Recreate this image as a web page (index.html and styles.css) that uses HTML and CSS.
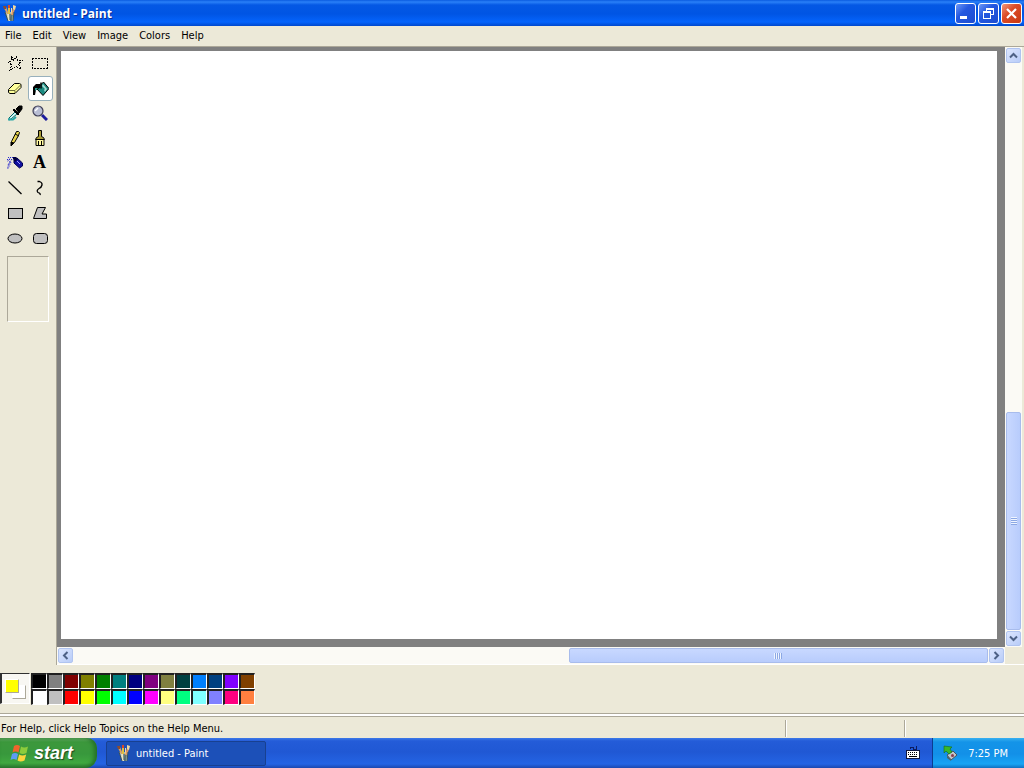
FILE: index.html
```html
<!DOCTYPE html>
<html lang="en">
<head>
    <meta charset="UTF-8">
    <meta name="viewport" content="width=device-width, initial-scale=1.0">
    <title>untitled - Paint</title>
    <link rel="stylesheet" href="styles.css">
</head>
<body>

    <!-- Shared icons -->
    <svg class="defs" aria-hidden="true">
        <symbol id="paint-logo" viewBox="0 0 16 16">
            <path d="M3 7h9l-1 9H6z" fill="#a8bcb8"/>
            <path d="M5 8h2l1 8H6z" fill="#ece4c0"/>
            <path d="M9 8h2l-1 8H8z" fill="#5c7470"/>
            <path d="M2 3l2-1 3 7H5z" fill="#d8a060"/>
            <path d="M1 1h3v3H2z" fill="#8c4c30"/>
            <path d="M6 3h2v6H6z" fill="#e0c040"/>
            <path d="M6 0h2v3H6z" fill="#d84828"/>
            <path d="M9 3h1v6H9z" fill="#f0dca8"/>
            <path d="M11 3l2 1-2 6H9z" fill="#e09860"/>
            <path d="M11 0l3 1-1 4-2-1z" fill="#f0d8a0"/>
            <path d="M3 7l3 9M12 7l-1 9M8 9v6" fill="none" stroke="#38505c"/>
        </symbol>
        <symbol id="chevron" viewBox="0 0 9 9">
            <path d="M1 6.500l3.500-3.500 3.500 3.500" fill="none" stroke="#4d6185" stroke-width="2"/>
        </symbol>
    </svg>

    <div class="window">
        <header class="titlebar">
            <svg class="logo"><use href="#paint-logo"/></svg>
            <h1>untitled - Paint</h1>
            <button class="win-btn" aria-label="Minimize">
                <svg viewBox="0 0 19 19"><path d="M4 12h7v3H4z" fill="#fff"/></svg>
            </button>
            <button class="win-btn" aria-label="Restore">
                <svg viewBox="0 0 19 19" shape-rendering="crispEdges">
                    <path d="M7 4h8v7h-3v-1h2V6H8v1H7zM4 7h8v8H4zM5 9v5h6V9z" fill="#fff" fill-rule="evenodd"/>
                </svg>
            </button>
            <button class="win-btn close" aria-label="Close">
                <svg viewBox="0 0 19 19"><path d="M5 5l9 9M14 5l-9 9" stroke="#fff" stroke-width="2.200"/></svg>
            </button>
        </header>

        <nav class="menubar">
            <button>File</button>
            <button>Edit</button>
            <button>View</button>
            <button>Image</button>
            <button>Colors</button>
            <button>Help</button>
        </nav>

        <div class="main">
            <aside class="toolbox">
                <div class="tools">
                    <button class="tool" aria-label="Free-form select">
                        <svg viewBox="0 0 16 16" shape-rendering="crispEdges"><path d="M4.500 1.500l2 4 3-4 1 4h5l-4 3.500 2.500 5-5-2.500-6 4 1.500-5.500-3.500-3 3.500-1z" fill="none" stroke="#000" stroke-dasharray="2 1"/></svg>
                    </button>
                    <button class="tool" aria-label="Select">
                        <svg viewBox="0 0 16 16" shape-rendering="crispEdges"><path d="M0 3.500h16M15.500 3v11M16 13.500H0M.5 14V3" fill="none" stroke="#000" stroke-dasharray="2 1"/></svg>
                    </button>
                    <button class="tool" aria-label="Eraser">
                        <svg viewBox="0 0 16 16">
                            <path d="M1.500 9.500l6-6h5l1.500 1v3l-6 6h-5l-1.500-1z" fill="#ffff9a" stroke="#000"/>
                            <path d="M2 10.500h6l6-6M8 11v2" fill="none" stroke="#6b6b38"/>
                        </svg>
                    </button>
                    <button class="tool selected" aria-label="Fill with color">
                        <svg viewBox="0 0 16 16">
                            <path d="M6 5.500L10.500 1l5.500 6.500-6 7L4 8z" fill="#1a8a80" stroke="#000"/>
                            <path d="M10 3l4 5-2 3-1-2 1-1-3-3z" fill="#a8dcd4"/>
                            <path d="M8 1.500v6" stroke="#000" stroke-width="1.500"/>
                            <path d="M7 3H3L0 6v8h2l1-5 4-2z" fill="#000"/>
                            <path d="M2 7h3l-3 3z" fill="#20a090"/>
                        </svg>
                    </button>
                    <button class="tool" aria-label="Pick color">
                        <svg viewBox="0 0 16 16">
                            <path d="M2 13l6-6 2 2-6 5-2 1z" fill="#d0f4f4" stroke="#006868"/>
                            <path d="M1 14.500h5l3-2.500" fill="none" stroke="#28a8a8" stroke-width="2"/>
                            <path d="M7 4l5 5-1 1-5-5zM9 4l3-3h3v3l-3 4z" fill="#000" stroke="#000"/>
                        </svg>
                    </button>
                    <button class="tool" aria-label="Magnifier">
                        <svg viewBox="0 0 16 16">
                            <path d="M10 10l5 5" stroke="#1c1c9c" stroke-width="3"/>
                            <circle cx="6" cy="6" r="5" fill="#b9bed4" stroke="#404058" stroke-width="1.200"/>
                            <path d="M3 6l3-3" stroke="#fff" stroke-width="1.500"/>
                        </svg>
                    </button>
                    <button class="tool" aria-label="Pencil">
                        <svg viewBox="0 0 16 16">
                            <path d="M9.500 1.500h2l1 1-1 3-4 7-3 3v-4z" fill="#e8d44c" stroke="#000"/>
                            <path d="M4 12l3 1-3 3zM8 4l4 2" fill="#000" stroke="#000"/>
                        </svg>
                    </button>
                    <button class="tool" aria-label="Brush">
                        <svg viewBox="0 0 16 16">
                            <path d="M6.500 .5h3v6l2 1 1 2H3.500l1-2 2-1z" fill="#a89c38" stroke="#000"/>
                            <path d="M4 9.500h8v6H4z" fill="#fff8a0" stroke="#000"/>
                            <path d="M6.500 11v4M9.500 11v4" stroke="#000"/>
                        </svg>
                    </button>
                    <button class="tool" aria-label="Airbrush">
                        <svg viewBox="0 0 16 16">
                            <path d="M7 5l3-2 5.500 5v3l-3 2-5.500-5z" fill="#1010a0" stroke="#000050"/>
                            <path d="M6 2h3l2 2-3 3-2-3z" fill="#000040"/>
                            <path d="M10 6l3 3" stroke="#a0a0ff"/>
                            <path d="M6 2.500H1M5 4.500H0M4 2L0 7M5 4l-4 6M3 6l-3 8M4 7l-3 7" fill="none" stroke="#2828d0" stroke-dasharray="1 1"/>
                        </svg>
                    </button>
                    <button class="tool text-tool" aria-label="Text">A</button>
                    <button class="tool" aria-label="Line">
                        <svg viewBox="0 0 16 16"><path d="M1.500 1.500l13 12.500" stroke="#000" stroke-width="1.300"/></svg>
                    </button>
                    <button class="tool" aria-label="Curve">
                        <svg viewBox="0 0 16 16"><path d="M5.500 1.500h2q3 1 2.500 3.500t-3 3.500q-3 2-1 4 3 1 2 2.500" fill="none" stroke="#000" stroke-width="1.300"/></svg>
                    </button>
                    <button class="tool" aria-label="Rectangle">
                        <svg viewBox="0 0 16 16" shape-rendering="crispEdges"><path d="M1.500 3.500h14v10h-14z" fill="#c0c0c0" stroke="#000"/></svg>
                    </button>
                    <button class="tool" aria-label="Polygon">
                        <svg viewBox="0 0 16 16"><path d="M5.500 2.500h8l-3.500 6.500h4.500v4.500h-13z" fill="#c0c0c0" stroke="#000"/></svg>
                    </button>
                    <button class="tool" aria-label="Ellipse">
                        <svg viewBox="0 0 16 16"><ellipse cx="8" cy="8.500" rx="7" ry="4.500" fill="#c0c0c0" stroke="#000"/></svg>
                    </button>
                    <button class="tool" aria-label="Rounded rectangle">
                        <svg viewBox="0 0 16 16"><rect x="1.500" y="3.500" width="14" height="10" rx="3" fill="#c0c0c0" stroke="#000"/></svg>
                    </button>
                </div>
                <div class="tool-options"></div>
            </aside>

            <div class="workspace">
                <div class="canvas-area"><div class="canvas"></div></div>
                <div class="scrollbar vertical">
                    <button class="arrow" aria-label="Scroll up"><svg><use href="#chevron"/></svg></button>
                    <div class="track"></div>
                    <div class="thumb"><span class="grip"></span></div>
                    <button class="arrow down" aria-label="Scroll down"><svg><use href="#chevron"/></svg></button>
                </div>
                <div class="scrollbar horizontal">
                    <button class="arrow left" aria-label="Scroll left"><svg><use href="#chevron"/></svg></button>
                    <div class="track"></div>
                    <div class="thumb"><span class="grip"></span></div>
                    <button class="arrow right" aria-label="Scroll right"><svg><use href="#chevron"/></svg></button>
                </div>
                <div class="corner"></div>
            </div>
        </div>

        <div class="palette">
            <div class="current">
                <span class="background-color"></span>
                <span class="foreground-color"></span>
            </div>
            <div class="swatches">
                <button class="swatch black" aria-label="Black"></button>
                <button class="swatch gray" aria-label="Gray"></button>
                <button class="swatch maroon" aria-label="Maroon"></button>
                <button class="swatch olive" aria-label="Olive"></button>
                <button class="swatch green" aria-label="Green"></button>
                <button class="swatch teal" aria-label="Teal"></button>
                <button class="swatch navy" aria-label="Navy"></button>
                <button class="swatch purple" aria-label="Purple"></button>
                <button class="swatch moss" aria-label="Moss"></button>
                <button class="swatch pine" aria-label="Pine"></button>
                <button class="swatch azure" aria-label="Azure"></button>
                <button class="swatch denim" aria-label="Denim"></button>
                <button class="swatch violet" aria-label="Violet"></button>
                <button class="swatch brown" aria-label="Brown"></button>
                <button class="swatch white" aria-label="White"></button>
                <button class="swatch silver" aria-label="Silver"></button>
                <button class="swatch red" aria-label="Red"></button>
                <button class="swatch yellow" aria-label="Yellow"></button>
                <button class="swatch lime" aria-label="Lime"></button>
                <button class="swatch cyan" aria-label="Cyan"></button>
                <button class="swatch blue" aria-label="Blue"></button>
                <button class="swatch magenta" aria-label="Magenta"></button>
                <button class="swatch cream" aria-label="Cream"></button>
                <button class="swatch mint" aria-label="Mint"></button>
                <button class="swatch ice" aria-label="Ice"></button>
                <button class="swatch lavender" aria-label="Lavender"></button>
                <button class="swatch rose" aria-label="Rose"></button>
                <button class="swatch orange" aria-label="Orange"></button>
            </div>
        </div>

        <footer class="statusbar">
            <span class="help-text">For Help, click Help Topics on the Help Menu.</span>
            <span class="pane"></span>
            <span class="pane"></span>
        </footer>
    </div>

    <div class="taskbar">
        <button class="start">
            <svg viewBox="0 0 20 20">
                <path d="M4 3q3-2 6 0L8.500 9.500q-3-2-6 0z" fill="#f0642c"/>
                <path d="M11 3.500q3 2 7 0L16.500 10q-4 2-7 0z" fill="#8ccc3c"/>
                <path d="M2 11q3-2 6 0l-1.500 6q-3-2-6 0z" fill="#5c9cf4"/>
                <path d="M9.200 11.500q3 2 7 0l-1.700 6q-4 2-7 0z" fill="#fcd43c"/>
            </svg>
            <span>start</span>
        </button>
        <button class="task">
            <svg class="logo"><use href="#paint-logo"/></svg>
            <span>untitled - Paint</span>
        </button>
        <svg class="keyboard" viewBox="0 0 14 14" shape-rendering="crispEdges">
            <path d="M4 3V1h3v2h3V0" fill="none" stroke="#0c1c60"/>
            <path d="M0 4h14v9H0z" fill="#101840"/>
            <path d="M1 5h12v7H1z" fill="#fff"/>
            <path d="M2 6.500h10M2 8.500h10" stroke="#000" stroke-dasharray="1 1"/>
            <path d="M3 10.500h8" stroke="#000"/>
        </svg>
        <div class="tray">
            <svg viewBox="0 0 16 16">
                <path d="M4 10l6-4 4 4-6 5z" fill="#c0c8cc" stroke="#45565c"/>
                <path d="M4 11l4 3v2l-4-3z" fill="#506468"/>
                <circle cx="9.500" cy="10.500" r="1.500" fill="#8c3c4c"/>
                <path d="M1 1l8 1-2 2 2 3-3 2-3-3-2 2z" fill="#38b828" stroke="#186c18" stroke-width=".6"/>
            </svg>
            <time>7:25 PM</time>
        </div>
    </div>

</body>
</html>
```

FILE: styles.css
```css
* {
    box-sizing: border-box;
}

body {
    margin: 0;
    height: 100vh;
    display: flex;
    flex-direction: column;
    overflow: hidden;
    background-color: #ece9d8;
    color: #000;
    font-family: Tahoma, "DejaVu Sans Condensed", "Liberation Sans", sans-serif;
    font-size: 11px;
}

button {
    margin: 0;
    padding: 0;
    border: none;
    background: none;
    color: inherit;
    font: inherit;
}

svg {
    display: block;
    flex: none;
}

.defs {
    position: absolute;
    width: 0;
    height: 0;
}

.logo {
    width: 16px;
    height: 16px;
}

.window {
    flex: 1;
    min-height: 0;
    display: flex;
    flex-direction: column;
}

/* Title bar */
.titlebar {
    display: flex;
    align-items: center;
    gap: 2px;
    height: 26px;
    padding: 0 2px;
    background: linear-gradient(#0a5be0 0, #2a80f8 2px, #0458e4 5px, #0055e4 14px, #0464fc 22px, #0048cc 26px);
}

.titlebar h1 {
    flex: 1;
    margin: 0;
    padding-left: 2px;
    color: #fff;
    font-family: "Open Sans", "Trebuchet MS", sans-serif;
    font-size: 12px;
    font-weight: bold;
    text-shadow: 1px 1px #0a2c90;
}

.win-btn {
    width: 21px;
    height: 21px;
    border: 1px solid #fff;
    border-radius: 3px;
    background: linear-gradient(135deg, #6c98f8, #2458e0 40%, #1c4cd0);
}

.win-btn.close {
    background: linear-gradient(135deg, #f0987c, #dc4c28 40%, #c83810);
}

/* Menu */
.menubar {
    display: flex;
    gap: 11px;
    height: 20px;
    padding: 0 5px 2px;
}

/* Tools */
.main {
    flex: 1;
    min-height: 0;
    display: flex;
}

.toolbox {
    width: 57px;
    padding: 3px 2px;
    border-top: 1px solid #aca899;
    border-right: 1px solid #aca899;
}

.tools {
    display: grid;
    grid-template-columns: repeat(2, 25px);
    grid-auto-rows: 25px;
}

.tool {
    display: flex;
    align-items: center;
    justify-content: center;
}

.tool svg {
    width: 16px;
    height: 16px;
}

.tool.selected {
    margin: 1px -1px -1px 1px;
    border: 1px solid #98b0bc;
    border-radius: 3px;
    background-color: #fff;
}

.text-tool {
    font-family: "Liberation Serif", serif;
    font-size: 18px;
    font-weight: bold;
}

.tool-options {
    width: 42px;
    height: 66px;
    margin: 6px 0 0 5px;
    border: 1px solid;
    border-color: #aca899 #fff #fff #aca899;
}

/* Canvas and scrollbars */
.workspace {
    flex: 1;
    min-width: 0;
    display: grid;
    grid-template-columns: 1fr 17px;
    grid-template-rows: 1fr 17px;
    padding-right: 2px;
    border-top: 1px solid #aca899;
    border-bottom: 1px solid #fff;
}

.canvas-area {
    padding: 4px 8px 8px 4px;
    background-color: #808080;
}

.canvas {
    height: 100%;
    background-color: #fff;
}

.scrollbar {
    display: flex;
    gap: 1px;
    padding: 1px;
    background-color: #fbfaf5;
}

.vertical {
    flex-direction: column;
}

.horizontal {
    grid-row: 2;
    grid-column: 1;
}

.corner {
    grid-row: 2;
    grid-column: 2;
}

.arrow {
    display: flex;
    align-items: center;
    justify-content: center;
    width: 15px;
    height: 15px;
    border: 1px solid #b0c4f0;
    border-radius: 2px;
    background: linear-gradient(135deg, #dce6fe, #b8ccf8);
}

.arrow svg {
    width: 9px;
    height: 9px;
}

.arrow.down svg {
    transform: rotate(180deg);
}

.arrow.left svg {
    transform: rotate(-90deg);
}

.arrow.right svg {
    transform: rotate(90deg);
}

.track {
    flex: 495;
}

.thumb {
    flex: 418;
    display: flex;
    align-items: center;
    justify-content: center;
    border: 1px solid #a8bcec;
    border-radius: 2px;
    background: linear-gradient(#c8d8ff, #b8ccfc);
}

.grip {
    width: 8px;
    height: 6px;
    background: repeating-linear-gradient(90deg, #eef4ff 0 1px, #8ca8e4 1px 2px);
}

.vertical .track {
    flex: 348;
}

.vertical .thumb {
    flex: 217;
    background: linear-gradient(90deg, #c8d8ff, #b8ccfc);
}

.vertical .grip {
    width: 6px;
    height: 8px;
    background: repeating-linear-gradient(#eef4ff 0 1px, #8ca8e4 1px 2px);
}

/* Color palette */
.palette {
    display: flex;
    gap: 1px;
    height: 49px;
    padding-top: 8px;
    border-bottom: 1px solid #aca899;
}

.current {
    position: relative;
    width: 30px;
    height: 31px;
    border: solid;
    border-width: 1px 1px 1px 2px;
    border-color: #303030 #fff #fff #303030;
    background-color: #f8f7f2;
}

.foreground-color,
.background-color {
    position: absolute;
    width: 14px;
    height: 14px;
    border: 1px solid;
    border-color: #fff #aca899 #aca899 #fff;
}

.foreground-color {
    top: 5px;
    left: 3px;
    background-color: #ff0;
}

.background-color {
    top: 11px;
    left: 10px;
    background-color: #fff;
}

.swatches {
    display: grid;
    grid-template-columns: repeat(14, 16px);
    grid-auto-rows: 16px;
}

.swatch {
    border: solid;
    border-width: 2px 1px 1px 2px;
    border-color: #202020 #fff #fff #202020;
}

.black { background-color: #000; }
.gray { background-color: #808080; }
.maroon { background-color: #800000; }
.olive { background-color: #808000; }
.green { background-color: #008000; }
.teal { background-color: #008080; }
.navy { background-color: #000080; }
.purple { background-color: #800080; }
.moss { background-color: #808040; }
.pine { background-color: #004040; }
.azure { background-color: #0080ff; }
.denim { background-color: #004080; }
.violet { background-color: #8000ff; }
.brown { background-color: #804000; }
.white { background-color: #fff; }
.silver { background-color: #c0c0c0; }
.red { background-color: #f00; }
.yellow { background-color: #ff0; }
.lime { background-color: #0f0; }
.cyan { background-color: #0ff; }
.blue { background-color: #00f; }
.magenta { background-color: #f0f; }
.cream { background-color: #ffff80; }
.mint { background-color: #00ff80; }
.ice { background-color: #80ffff; }
.lavender { background-color: #8080ff; }
.rose { background-color: #ff0080; }
.orange { background-color: #ff8040; }

/* Status bar */
.statusbar {
    display: flex;
    align-items: center;
    height: 24px;
    padding: 4px 1px 2px;
    border-top: 2px solid #fff;
    box-shadow: inset 0 1px #aca899;
}

.help-text {
    flex: 1;
}

.pane {
    width: 119px;
    height: 17px;
    border-left: 1px solid #aca899;
    box-shadow: inset 1px 0 #fff;
}

/* Taskbar */
.taskbar {
    display: flex;
    align-items: center;
    height: 30px;
    color: #fff;
    background: linear-gradient(#3c78e8 0, #245cd8 3px, #2058d4 14px, #2464e4 26px, #1c48b0 30px);
}

.start {
    display: flex;
    align-items: center;
    gap: 4px;
    width: 97px;
    height: 30px;
    padding-left: 10px;
    border-radius: 0 10px 12px 0;
    background: linear-gradient(#68b068 0, #3c983c 4px, #38983c 16px, #40a840 25px, #2c7830 30px);
    box-shadow: inset -3px 0 4px #247028;
    font-family: "Liberation Sans", sans-serif;
    font-size: 18px;
    font-style: italic;
    font-weight: bold;
    line-height: 26px;
    text-shadow: 1px 1px 1px #204820;
}

.start svg {
    width: 20px;
    height: 20px;
}

.task {
    display: flex;
    align-items: center;
    gap: 4px;
    width: 160px;
    height: 25px;
    margin-left: 9px;
    padding-left: 9px;
    border: 1px solid #184090;
    border-radius: 2px;
    background-color: #1c50b8;
}

.keyboard {
    width: 14px;
    height: 14px;
    margin: 0 12px 0 auto;
}

.tray {
    display: flex;
    align-items: center;
    gap: 9px;
    height: 30px;
    padding: 0 16px 0 10px;
    border-left: 1px solid #0c3c90;
    background: linear-gradient(#38b0f0 0, #1494e8 4px, #1290e8 16px, #18a4f4 26px, #1070c0 30px);
}

.tray svg {
    width: 16px;
    height: 16px;
}
```
